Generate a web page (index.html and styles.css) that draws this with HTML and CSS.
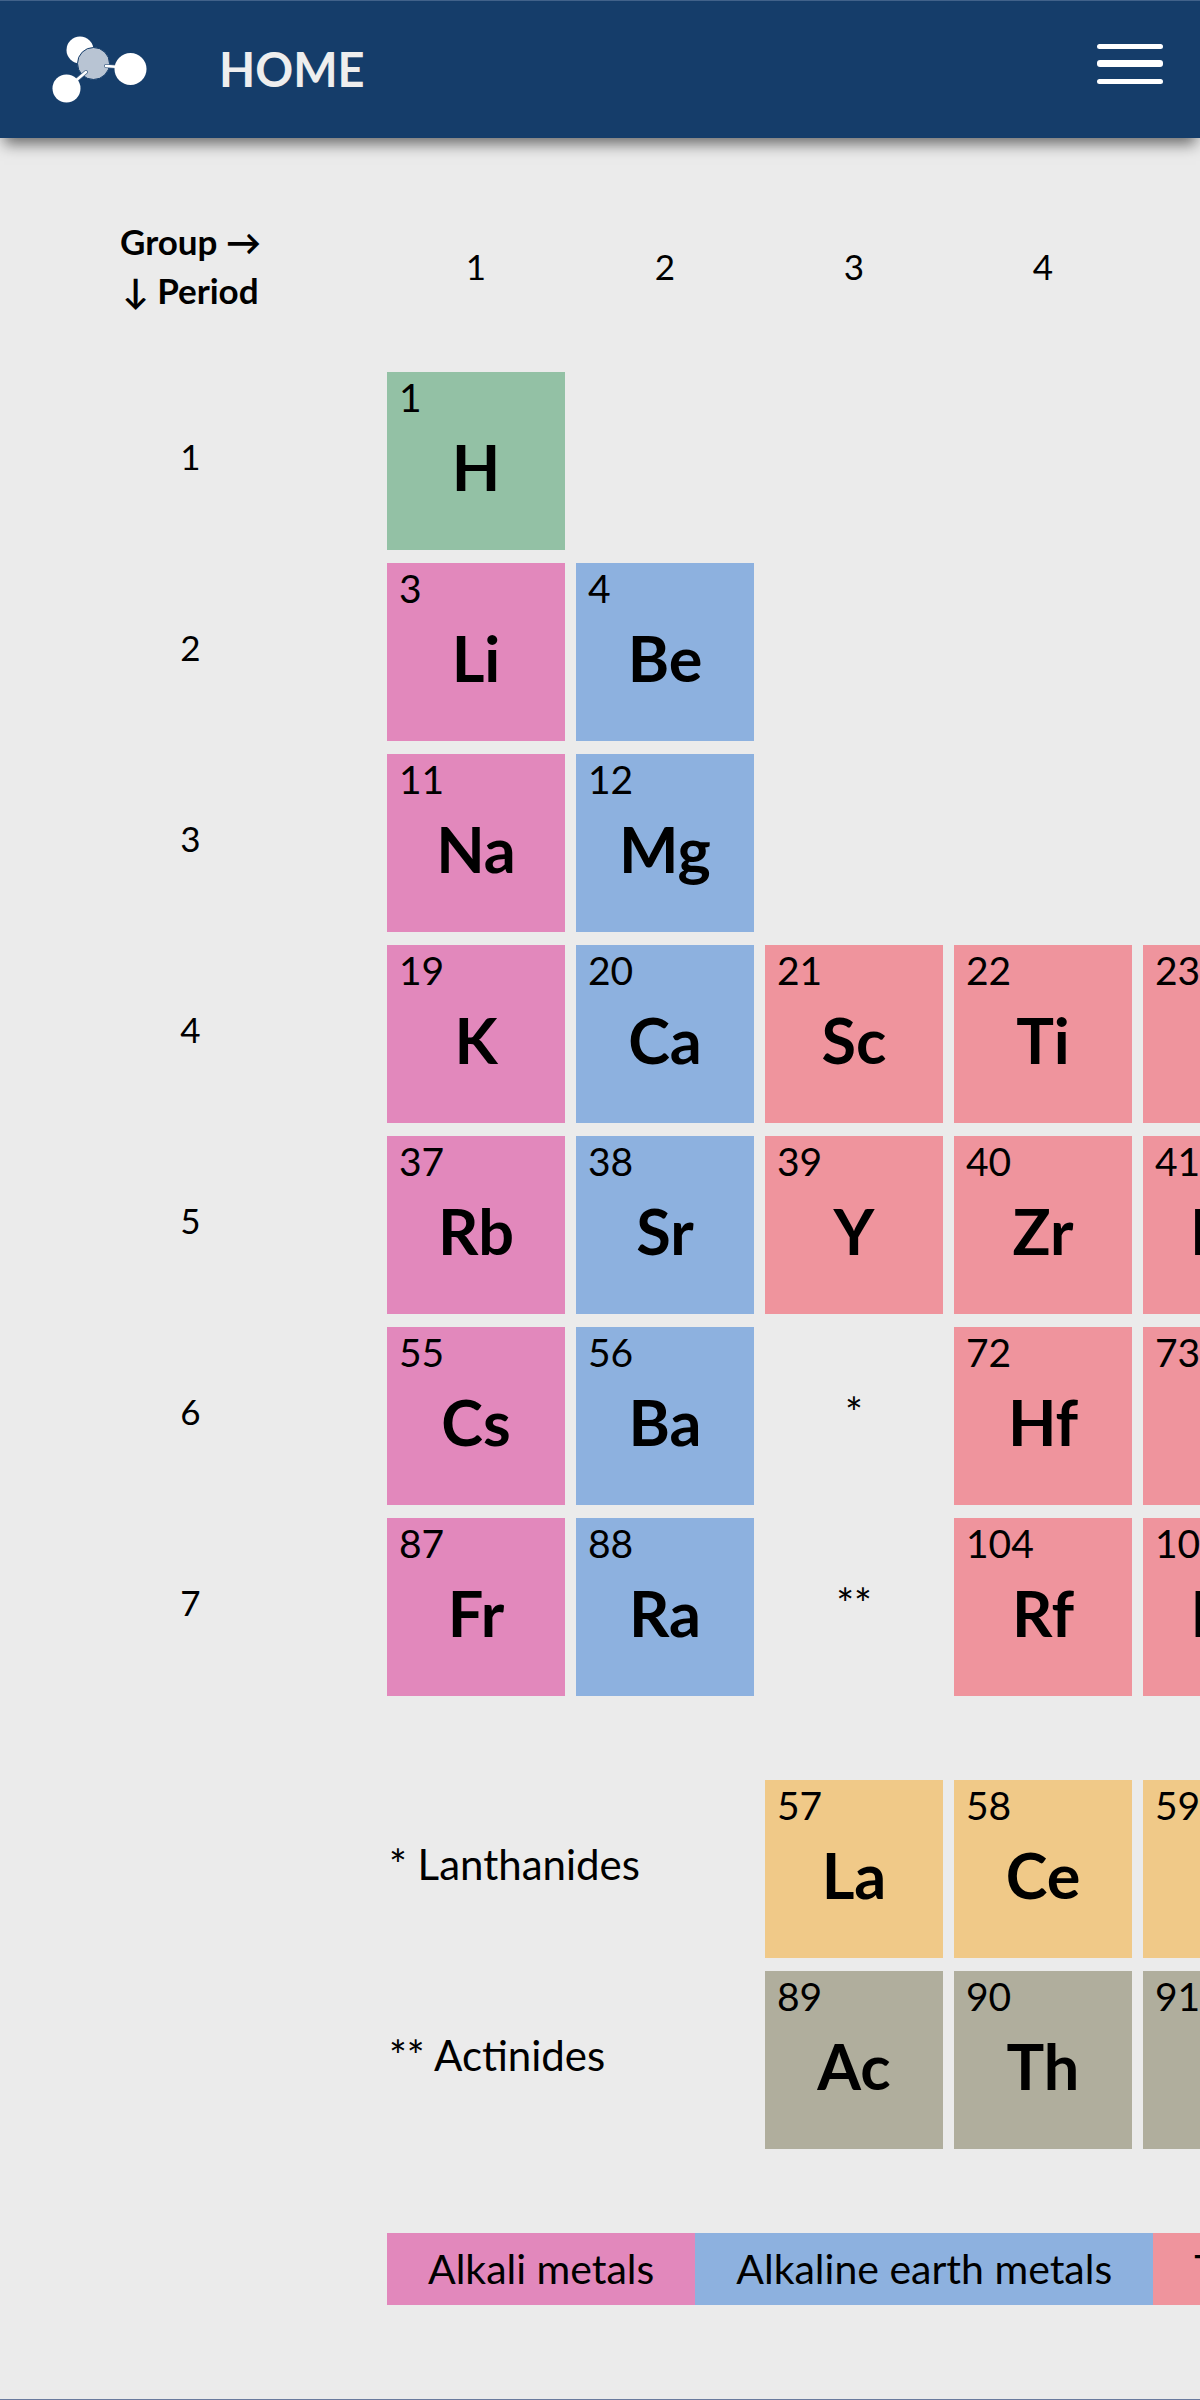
FILE: index.html
```html
<!DOCTYPE html>
<html lang="en">
<head>
<meta charset="utf-8">
<meta name="viewport" content="width=device-width, initial-scale=1">
<title>Home</title>
<link rel="stylesheet" href="styles.css">
</head>
<body>
<header class="bar">
  <a class="brand" href="#">
    <svg class="logo" viewBox="0 0 96 68" aria-hidden="true">
      <circle cx="28" cy="15" r="13.5" fill="#fff"/>
      <circle cx="41.5" cy="28.5" r="16" fill="#b8c4d3" stroke="#153d6a" stroke-width="1"/>
      <g stroke-linecap="round">
        <path d="M54 31 67 32M34 37 21 48" stroke="#45658a" stroke-width="4"/>
        <path d="M54 31 67 32M34 37 21 48" stroke="#fff" stroke-width="2.4"/>
      </g>
      <circle cx="78.5" cy="34" r="16" fill="#fff"/>
      <circle cx="14.5" cy="53.5" r="14" fill="#fff"/>
    </svg>
    <span>HOME</span>
  </a>
  <button class="menu" type="button" aria-label="Menu">
    <svg viewBox="0 0 66 42" aria-hidden="true" fill="#fff">
      <rect y="1" width="66" height="5" rx="2.5"/>
      <rect y="17" width="66" height="7" rx="3"/>
      <rect y="36" width="66" height="5" rx="2.5"/>
    </svg>
  </button>
</header>
<main class="content">
  <table class="elements">
    <thead>
      <tr><th class="side corner">Group →<br>↓ Period</th><th>1</th><th>2</th><th>3</th><th>4</th><th></th></tr>
    </thead>
    <tbody>
      <tr><th class="side">1</th><td><a class="tile nonmetal" href="#"><span>1</span><b>H</b></a></td></tr>
      <tr><th class="side">2</th><td><a class="tile alkali" href="#"><span>3</span><b>Li</b></a></td><td><a class="tile earth" href="#"><span>4</span><b>Be</b></a></td></tr>
      <tr><th class="side">3</th><td><a class="tile alkali" href="#"><span>11</span><b>Na</b></a></td><td><a class="tile earth" href="#"><span>12</span><b>Mg</b></a></td></tr>
      <tr><th class="side">4</th><td><a class="tile alkali" href="#"><span>19</span><b>K</b></a></td><td><a class="tile earth" href="#"><span>20</span><b>Ca</b></a></td><td><a class="tile transition" href="#"><span>21</span><b>Sc</b></a></td><td><a class="tile transition" href="#"><span>22</span><b>Ti</b></a></td><td><a class="tile transition" href="#"><span>23</span><b>V</b></a></td></tr>
      <tr><th class="side">5</th><td><a class="tile alkali" href="#"><span>37</span><b>Rb</b></a></td><td><a class="tile earth" href="#"><span>38</span><b>Sr</b></a></td><td><a class="tile transition" href="#"><span>39</span><b>Y</b></a></td><td><a class="tile transition" href="#"><span>40</span><b>Zr</b></a></td><td><a class="tile transition" href="#"><span>41</span><b>Nb</b></a></td></tr>
      <tr><th class="side">6</th><td><a class="tile alkali" href="#"><span>55</span><b>Cs</b></a></td><td><a class="tile earth" href="#"><span>56</span><b>Ba</b></a></td><td class="mark">*</td><td><a class="tile transition" href="#"><span>72</span><b>Hf</b></a></td><td><a class="tile transition" href="#"><span>73</span><b>Ta</b></a></td></tr>
      <tr><th class="side">7</th><td><a class="tile alkali" href="#"><span>87</span><b>Fr</b></a></td><td><a class="tile earth" href="#"><span>88</span><b>Ra</b></a></td><td class="mark">**</td><td><a class="tile transition" href="#"><span>104</span><b>Rf</b></a></td><td><a class="tile transition" href="#"><span>105</span><b>Db</b></a></td></tr>
    </tbody>
  </table>
  <table class="elements series">
    <tbody>
      <tr><td class="side"></td><th class="name">* Lanthanides</th><td><a class="tile lanthanide" href="#"><span>57</span><b>La</b></a></td><td><a class="tile lanthanide" href="#"><span>58</span><b>Ce</b></a></td><td><a class="tile lanthanide" href="#"><span>59</span><b>Pr</b></a></td></tr>
      <tr><td class="side"></td><th class="name">** Actinides</th><td><a class="tile actinide" href="#"><span>89</span><b>Ac</b></a></td><td><a class="tile actinide" href="#"><span>90</span><b>Th</b></a></td><td><a class="tile actinide" href="#"><span>91</span><b>Pa</b></a></td></tr>
    </tbody>
  </table>
  <ul class="legend">
    <li class="alkali">Alkali metals</li>
    <li class="earth">Alkaline earth metals</li>
    <li class="transition">Transition metals</li>
  </ul>
</main>
<footer class="foot"></footer>
</body>
</html>
```
FILE: styles.css
```css
* { box-sizing: border-box; }

body {
  display: flex;
  flex-direction: column;
  min-height: 100vh;
  margin: 0;
  background: #ebebeb;
  color: #000;
  font-family: Lato, "Open Sans", sans-serif;
  font-size: 35px;
}

.bar {
  position: relative;
  display: flex;
  align-items: center;
  justify-content: space-between;
  padding: 33px 36px 34px 52px;
  border-top: 1px solid #41628a;
  background: #153d6a;
  box-shadow: 0 10px 14px -4px rgba(0, 0, 0, 0.55);
}

.brand {
  display: flex;
  align-items: center;
  gap: 71px;
  color: #eee;
  font-size: 47px;
  font-weight: 700;
  line-height: 70px;
  text-decoration: none;
}

.logo { width: 96px; height: 68px; }

.menu {
  width: 68px;
  padding: 0 1px;
  border: 0;
  margin-bottom: 10px;
  background: none;
}

.menu svg { display: block; width: 66px; height: 42px; }

.content {
  flex: 1;
  padding: 26px 1px 92px 0;
  overflow: hidden;
}

.elements {
  width: 1332px;
  table-layout: fixed;
  border-spacing: 11px 13px;
}

.series { margin-top: 58px; }

.elements th, .elements td { width: 178px; padding: 0; font-weight: 400; }
.elements thead th { height: 182px; padding-bottom: 4px; }
.elements .side { width: 365px; padding: 0 6px 10px 0; }
.elements thead .side { padding-bottom: 4px; }
.elements .corner { font-weight: 700; line-height: 49px; }
.elements .mark { padding-bottom: 8px; font-size: 42px; text-align: center; }

.elements .name {
  width: 367px;
  padding: 0 0 10px 2px;
  font-size: 42px;
  text-align: left;
}

.tile {
  display: block;
  height: 178px;
  padding: 2px 12px;
  color: #000;
  font-size: 39px;
  line-height: 46px;
  text-decoration: none;
}

.tile span { display: block; }

.tile b {
  display: block;
  font-size: 63px;
  font-weight: 700;
  line-height: 94px;
  text-align: center;
}

.nonmetal { background: #93c1a5; }
.alkali { background: #e288bc; }
.earth { background: #8db1df; }
.transition { background: #ef949d; }
.lanthanide { background: #f0c988; }
.actinide { background: #b0ae9d; }

.legend {
  display: flex;
  margin: 71px 0 0 387px;
  padding: 0;
  font-size: 41px;
  line-height: 72px;
  list-style: none;
}

.legend li { flex: none; padding: 0 41px; }

.foot { border-top: 1px solid #6b7b9e; }
```
